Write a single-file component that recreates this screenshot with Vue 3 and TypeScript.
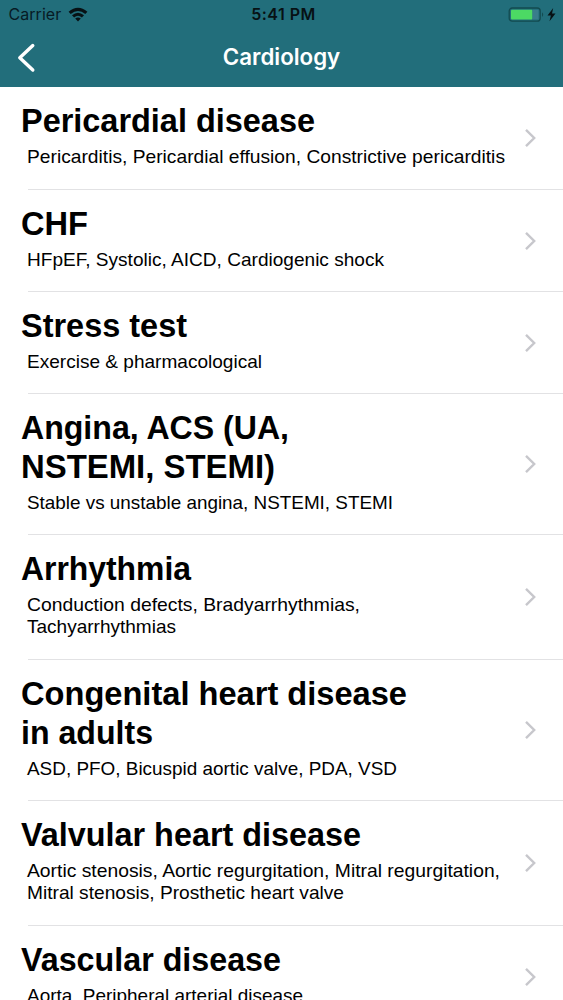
<script setup lang="ts">
interface Topic {
  title: string[]
  detail: string[]
  height: number
  titleWidths: number[]
  detailWidths: number[]
}

const topics: Topic[] = [
  { title: ['Pericardial disease'], detail: ['Pericarditis, Pericardial effusion, Constrictive pericarditis'], height: 102.5, titleWidths: [294], detailWidths: [478] },
  { title: ['CHF'], detail: ['HFpEF, Systolic, AICD, Cardiogenic shock'], height: 102.3, titleWidths: [67], detailWidths: [357] },
  { title: ['Stress test'], detail: ['Exercise & pharmacological'], height: 102.2, titleWidths: [166], detailWidths: [235] },
  { title: ['Angina, ACS (UA,', 'NSTEMI, STEMI)'], detail: ['Stable vs unstable angina, NSTEMI, STEMI'], height: 141, titleWidths: [268, 254], detailWidths: [366] },
  { title: ['Arrhythmia'], detail: ['Conduction defects, Bradyarrhythmias,', 'Tachyarrhythmias'], height: 125, titleWidths: [170], detailWidths: [333, 149] },
  { title: ['Congenital heart disease', 'in adults'], detail: ['ASD, PFO, Bicuspid aortic valve, PDA, VSD'], height: 141, titleWidths: [386, 132], detailWidths: [370] },
  { title: ['Valvular heart disease'], detail: ['Aortic stenosis, Aortic regurgitation, Mitral regurgitation,', 'Mitral stenosis, Prosthetic heart valve'], height: 125, titleWidths: [340], detailWidths: [473, 317] },
  { title: ['Vascular disease'], detail: ['Aorta, Peripheral arterial disease'], height: 102.3, titleWidths: [260], detailWidths: [276] },
]
</script>

<template>
  <main class="screen">
    <header class="header">
      <div class="status">
        <div class="carrier">
          <span>Carrier</span>
          <svg width="20" height="15" viewBox="0 0 20 15"><path d="M.6 4.8Q10-3.2 19.4 4.8L17.3 7Q10 1.2 2.7 7Z M4 8.3Q10 3.2 16 8.3L13.9 10.4Q10 7.3 6.1 10.4Z M7.2 11.6Q10 9.2 12.8 11.6L10 14.4Z" fill="#071114" /></svg>
        </div>
        <span class="clock">5:41 PM</span>
        <svg class="battery" width="50" height="16" viewBox="0 0 50 16"><rect x="1.2" y="1" width="31" height="13.2" rx="3" fill="none" stroke="#134b50" stroke-width="1.3" /><rect x="3" y="2.8" width="21.5" height="9.6" rx="1" fill="#4cd964" /><rect x="24.5" y="2.8" width="6" height="9.6" fill="#397d8b" /><path d="M34 5.3q2.4 2.3 0 4.6Z" fill="#134b50" /><path d="M45.2 1L39.5 8.6h3.4l-1.4 5.7 6-7.7h-3.5Z" fill="#071114" /></svg>
      </div>
      <div class="nav">
        <svg class="back" width="22" height="32" viewBox="0 0 22 32"><path d="M17.8 3.6L4.8 15.8l13 12.2" fill="none" stroke="white" stroke-width="3.4" stroke-linecap="round" stroke-linejoin="round" /></svg>
        <h1>Cardiology</h1>
      </div>
    </header>
    <section class="list">
      <article v-for="topic in topics" :key="topic.title[0]" class="row" :style="{ height: `${topic.height}px` }">
        <div class="copy">
          <h2><svg v-for="(line, i) in topic.title" :key="line" class="title-line" width="460" height="38.5"><text x="0" y="30" :textLength="topic.titleWidths[i]" lengthAdjust="spacingAndGlyphs">{{ line }}</text></svg></h2>
          <p><svg v-for="(line, i) in topic.detail" :key="line" class="detail-line" width="490" height="22"><text x="0" y="17" :textLength="topic.detailWidths[i]" lengthAdjust="spacingAndGlyphs">{{ line }}</text></svg></p>
        </div>
        <svg class="chevron" width="14" height="20" viewBox="0 0 14 20"><path d="M2 1.8l8.2 8.2L2 18.2" fill="none" stroke="#c7c7cc" stroke-width="2.4" /></svg>
      </article>
    </section>
  </main>
</template>

<style>
body { margin: 0; overflow: hidden; }
</style>

<style scoped>
.screen { width: 563px; height: 1000px; overflow: hidden; background: white; color: #000; font-family: "Liberation Sans", Arial, sans-serif; }
.header { height: 87px; background: #226e7b; }
.status { height: 29px; display: grid; grid-template-columns: 1fr auto 1fr; align-items: center; color: #071b25; font: 16px/29px "Inter", sans-serif; }
.carrier { display: flex; align-items: center; gap: 7px; padding-left: 8.5px; }
.carrier span { letter-spacing: .05px; }
.carrier svg { margin-top: -1px; }
.clock { white-space: nowrap; font-weight: 600; font-size: 16px; letter-spacing: .5px; padding-left: 4px; color: #071114; }
.battery { justify-self: end; margin-right: 5px; }
.nav { height: 58px; display: grid; grid-template-columns: 100px 1fr 100px; align-items: center; }
.back { margin-left: 15px; }
h1 { margin: 0; color: white; text-align: center; font: 600 22.3px/30px "Inter", sans-serif; position: relative; top: -1px; }
.row { position: relative; display: flex; align-items: center; justify-content: space-between; box-sizing: border-box; }
.row::after { content: ""; position: absolute; left: 28px; right: 0; bottom: 0; height: 1px; background: #e2e2e4; }
.copy { align-self: flex-start; padding: 15.4px 0 0 20.7px; }
h2, p { margin: 0; }
p { padding: 5.2px 0 0 6.7px; }
.title-line, .detail-line { display: block; overflow: visible; }
.title-line { font-size: 33.3px; font-weight: 700; }
.detail-line { font-size: 19px; }
.chevron { flex: none; margin-right: 25px; }
</style>
